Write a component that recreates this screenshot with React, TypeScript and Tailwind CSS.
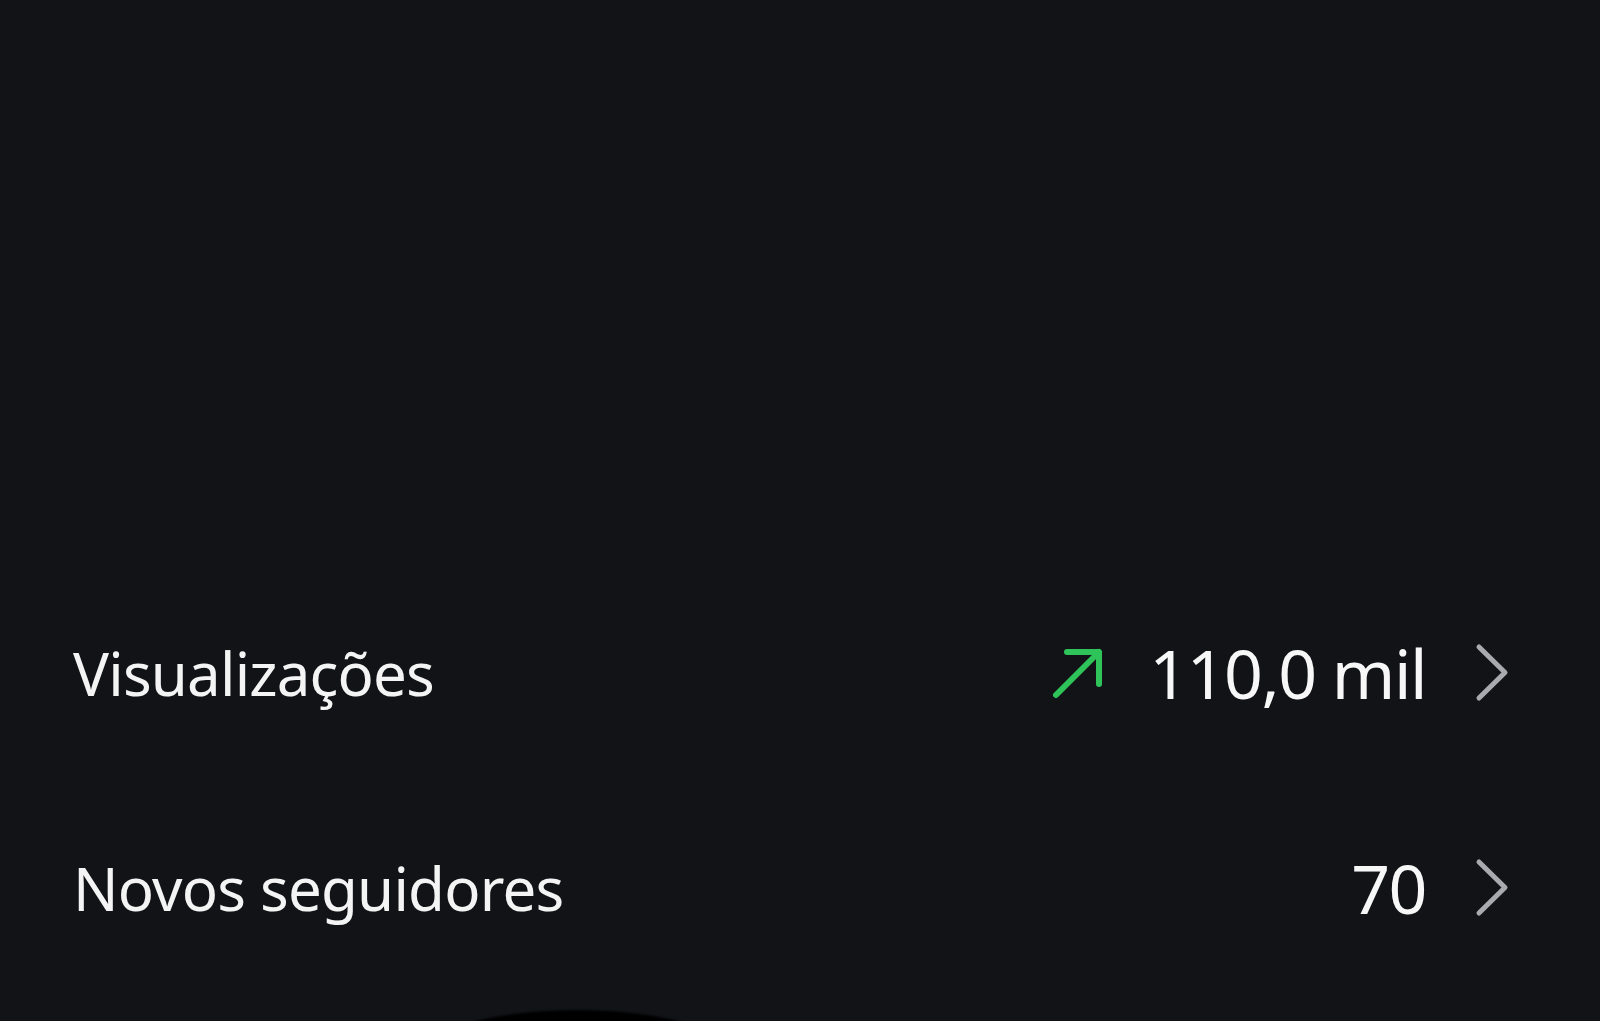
import { ReactNode } from 'react'

type Stat = {
  label: string
  value: string
  trend?: 'up'
}

const stats: Stat[] = [
  { label: 'Visualizações', value: '110,0 mil', trend: 'up' },
  { label: 'Novos seguidores', value: '70' },
]

function TrendUp() {
  return (
    <svg width="54" height="54" viewBox="0 0 54 54" fill="none" aria-hidden>
      <path
        d="M5 49 L48 6 M16 6 H48 V38"
        stroke="#2fc45a"
        strokeWidth="6"
        strokeLinecap="round"
        strokeLinejoin="round"
      />
    </svg>
  )
}

function Chevron() {
  return (
    <svg width="36" height="60" viewBox="0 0 36 60" fill="none" aria-hidden>
      <path
        d="M5 4 L31 29.5 L5 55"
        stroke="#a8aaaf"
        strokeWidth="5"
        strokeLinecap="round"
        strokeLinejoin="round"
      />
    </svg>
  )
}

function StatRow({ stat }: { stat: Stat }) {
  let trend: ReactNode = null
  if (stat.trend === 'up') trend = <TrendUp />

  return (
    <button
      type="button"
      className="flex h-[215px] w-full items-center justify-between pl-[73px] pr-[90px] text-left"
    >
      <span className="text-[60px] leading-none tracking-[-0.8px] text-[#f4f4f5]">{stat.label}</span>
      <span className="flex items-center">
        {trend && <span className="mr-[44px] flex">{trend}</span>}
        <span className="text-[68px] leading-none tracking-[-1.5px] text-[#f7f7f8]">{stat.value}</span>
        <span className="ml-[48px] flex">
          <Chevron />
        </span>
      </span>
    </button>
  )
}

export default function App() {
  return (
    <div
      className="relative flex h-[1021px] w-full flex-col justify-end overflow-hidden bg-[#111317] pb-[26px]"
      style={{ fontFamily: '"Noto Sans", "Open Sans", sans-serif' }}
    >
      {stats.map((s) => (
        <StatRow key={s.label} stat={s} />
      ))}
      {/* top of the floating dark handle peeking in at the bottom edge */}
      <div className="pointer-events-none absolute left-[377px] top-[1010px] h-[160px] w-[400px] rounded-[50%] bg-black blur-[1px]" />
    </div>
  )
}
